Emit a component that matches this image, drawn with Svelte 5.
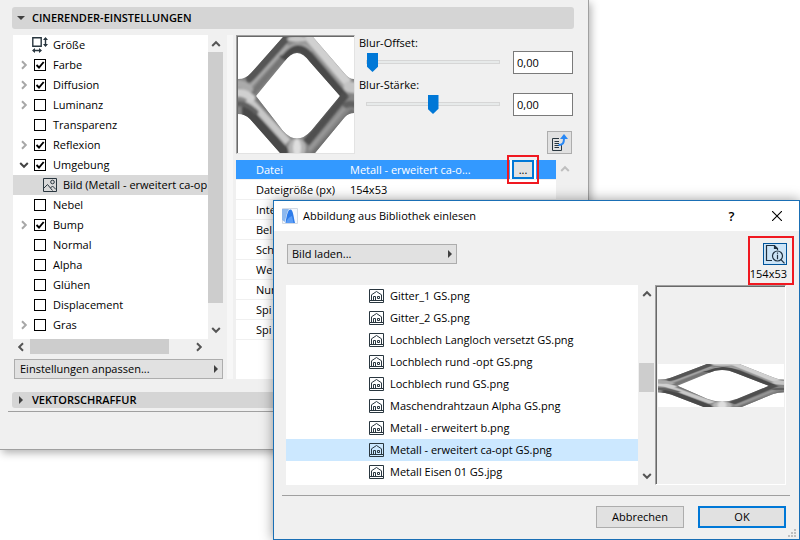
<script>
    let channels = $state([
        { name: 'Farbe', checked: true, expandable: true },
        { name: 'Diffusion', checked: true, expandable: true },
        { name: 'Luminanz', checked: false, expandable: true },
        { name: 'Transparenz', checked: false },
        { name: 'Reflexion', checked: true, expandable: true },
        { name: 'Umgebung', checked: true, expandable: true, child: 'Bild (Metall - erweitert ca-op' },
        { name: 'Nebel', checked: false },
        { name: 'Bump', checked: true, expandable: true },
        { name: 'Normal', checked: false },
        { name: 'Alpha', checked: false },
        { name: 'Glühen', checked: false },
        { name: 'Displacement', checked: false },
        { name: 'Gras', checked: false, expandable: true }
    ]);

    let sliders = $state([
        { id: 'offset', label: 'Blur-Offset:', position: 0, value: '0,00' },
        { id: 'strength', label: 'Blur-Stärke:', position: 50, value: '0,00' }
    ]);

    const properties = ['Inte', 'Bel', 'Sch', 'We', 'Nur', 'Spi', 'Spi'];

    const files = [
        'Gitter_1 GS.png',
        'Gitter_2 GS.png',
        'Lochblech Langloch versetzt GS.png',
        'Lochblech rund -opt GS.png',
        'Lochblech rund GS.png',
        'Maschendrahtzaun Alpha GS.png',
        'Metall - erweitert b.png',
        'Metall - erweitert ca-opt GS.png',
        'Metall Eisen 01 GS.jpg'
    ];
    let selectedFile = $state('Metall - erweitert ca-opt GS.png');
</script>

{#snippet chevron(direction)}
    <svg class="chevron {direction}" width="10" height="10" viewBox="0 0 10 10" aria-hidden="true">
        <path d="M1.2 7 L5 3.2 L8.8 7" />
    </svg>
{/snippet}

{#snippet triangle(direction)}
    <svg class="triangle {direction}" width="8" height="8" viewBox="0 0 8 8" aria-hidden="true">
        <path d="M2 0 L6 4 L2 8 Z" />
    </svg>
{/snippet}

{#snippet mesh(id)}
    <svg class="mesh" viewBox="0 0 116 116" preserveAspectRatio="none" role="img" aria-label="Metall - erweitert">
        <defs>
            <clipPath id="{id}-clip">
                <path clip-rule="evenodd" d="M0 42 Q8 42 13 36 L45 0 H75 L107 37 Q111 42 116 42 V76 Q110 76 106 81 L77 116 H42 L12 82 Q7 77 0 77 Z
                    M18 59 L46 25 Q59 7 72 25 L102 59 L73 94 Q59 109 45 94 Z" />
            </clipPath>
            <filter id="{id}-soft" x="-20%" y="-20%" width="140%" height="140%">
                <feGaussianBlur stdDeviation="1.2" />
            </filter>
        </defs>
        <rect width="116" height="116" fill="#fff" />
        <g clip-path="url(#{id}-clip)">
            <rect width="116" height="116" fill="#858585" />
            <g fill="none" filter="url(#{id}-soft)">
                <!-- upper left bar -->
                <path d="M8 42 Q12 41 18 35 L50 -2" stroke="#555" stroke-width="9" />
                <path d="M10 52 L50 8" stroke="#a8a8a8" stroke-width="3" />
                <path d="M14 57 L52 13" stroke="#747474" stroke-width="5" />
                <!-- upper right bar -->
                <path d="M69 -2 L110 46" stroke="#d0d0d0" stroke-width="9" />
                <path d="M64 2 L107 53" stroke="#999" stroke-width="4" />
                <path d="M45 22 Q59 2 72 20 L106 60" stroke="#484848" stroke-width="9" />
                <path d="M43 18 Q59 -2 74 14" stroke="#aaa" stroke-width="2" />
                <!-- lower left bar -->
                <path d="M4 74 Q10 74 15 81 L48 118" stroke="#484848" stroke-width="11" />
                <path d="M10 62 L50 105" stroke="#c8c8c8" stroke-width="7" />
                <path d="M16 59 L48 95" stroke="#777" stroke-width="3" />
                <!-- lower right bar -->
                <path d="M108 57 L68 106" stroke="#505050" stroke-width="8" />
                <path d="M112 65 L71 113" stroke="#999" stroke-width="3" />
                <path d="M116 74 L74 120" stroke="#707070" stroke-width="7" />
                <!-- joints -->
                <path d="M0 47 Q6 47 11 52" stroke="#aaa" stroke-width="8" stroke-linecap="round" />
                <path d="M-2 56 Q6 55 13 61" stroke="#d0d0d0" stroke-width="8" stroke-linecap="round" />
                <path d="M-2 67 Q8 65 18 75" stroke="#606060" stroke-width="5" stroke-linecap="round" />
                <path d="M111 50 L118 51" stroke="#c4c4c4" stroke-width="11" stroke-linecap="round" />
                <path d="M108 68 Q112 66 118 68" stroke="#606060" stroke-width="6" stroke-linecap="round" />
                <ellipse cx="59" cy="111" rx="9" ry="10" fill="#b4b4b4" />
                <ellipse cx="59" cy="111" rx="4" ry="9" fill="#dedede" />
                <ellipse cx="59" cy="2" rx="10" ry="3" fill="#c8c8c8" />
            </g>
        </g>
    </svg>
{/snippet}

<main>
    <section class="panel">
        <button class="section-head">{@render triangle('down')}CINERENDER-EINSTELLUNGEN</button>

        <div class="settings">
            <div class="channels">
                <div class="tree-wrap">
                    <ul class="tree">
                        <li class="size">
                            <svg width="16" height="16" viewBox="0 0 16 16" aria-hidden="true">
                                <path d="M.8 .8 H9.2 V9.2 H.8 Z" fill="#fff" stroke="#29363f" stroke-width="1.4" />
                                <path d="M13.5 1 V9 M1 13.5 H9" stroke="#29363f" stroke-width="1.4" />
                                <path d="M13.5 0 L16 3 H11 Z M13.5 10 L16 7 H11 Z M0 13.5 L3 11 V16 Z M10 13.5 L7 11 V16 Z" fill="#29363f" />
                            </svg>
                            Größe
                        </li>
                        {#each channels as channel}
                            <li>
                                <span class="expander" class:open={channel.child}>
                                    {#if channel.expandable}
                                        {@render chevron(channel.child ? 'down' : 'right')}
                                    {/if}
                                </span>
                                <label>
                                    <input type="checkbox" bind:checked={channel.checked} />
                                    {channel.name}
                                </label>
                            </li>
                            {#if channel.child}
                                <li class="child">
                                    <svg width="14" height="14" viewBox="0 0 14 14" fill="none" stroke="#29363f" aria-hidden="true">
                                        <path d="M.5 .5 H13.5 V13.5 H.5 Z" />
                                        <circle cx="9.5" cy="4" r="1.8" />
                                        <path d="M1 10 L4.5 6.5 L9.5 12.5 M7.5 10 L9.5 8 L13 11.5" />
                                    </svg>
                                    {channel.child}
                                </li>
                            {/if}
                        {/each}
                    </ul>
                    <div class="scrollbar">
                        {@render chevron('up')}
                        <div class="track"><div class="thumb tree-thumb"></div></div>
                        {@render chevron('down')}
                    </div>
                </div>
                <div class="scrollbar horizontal">
                    {@render chevron('left')}
                    <div class="track"><div class="thumb"></div></div>
                    {@render chevron('right')}
                </div>
                <button class="menu-button">Einstellungen anpassen... {@render triangle('right')}</button>
            </div>

            <div class="splitter"></div>

            <div class="details">
                <div class="texture">
                    <div class="swatch">{@render mesh('swatch')}</div>
                    <div class="blur">
                        {#each sliders as slider}
                            <div class="blur-row">
                                <div class="slider">
                                    <label for={slider.id}>{slider.label}</label>
                                    <input id={slider.id} type="range" min="0" max="100" bind:value={slider.position} />
                                </div>
                                <input class="number" type="text" aria-label={slider.label} bind:value={slider.value} />
                            </div>
                        {/each}
                        <button class="reload" aria-label="Bild neu laden">
                            <svg width="18" height="18" viewBox="0 0 18 18" fill="none" aria-hidden="true">
                                <path d="M8 4.5 H1.5 V16.5 H10.5 V11 M3.5 7.5 H8 M3.5 9.5 H8 M3.5 11.5 H8 M3.5 13.5 H8" stroke="#29363f" />
                                <path d="M7.5 11 C12 11 13 9 13 4" stroke="#2787f5" stroke-width="2" />
                                <path d="M13 0 L17 5 H9 Z" fill="#2787f5" />
                            </svg>
                        </button>
                    </div>
                </div>

                <div class="table-wrap">
                    <table>
                        <tbody>
                            <tr class="selected">
                                <th scope="row">Datei</th>
                                <td>Metall - erweitert ca-o...</td>
                                <td class="action">
                                    <span class="browse"><button>...</button></span>
                                </td>
                            </tr>
                            <tr>
                                <th scope="row">Dateigröße (px)</th>
                                <td>154x53</td>
                                <td></td>
                            </tr>
                            {#each properties as property}
                                <tr>
                                    <th scope="row">{property}</th>
                                    <td></td>
                                    <td></td>
                                </tr>
                            {/each}
                        </tbody>
                    </table>
                    <div class="scrollbar disabled">{@render chevron('up')}</div>
                </div>
            </div>
        </div>

        <button class="section-head closed">{@render triangle('right')}VEKTORSCHRAFFUR</button>
        <hr />
    </section>

    <section class="dialog" role="dialog" aria-labelledby="dialog-title">
        <header>
            <svg width="16" height="16" viewBox="0 0 16 16" aria-hidden="true">
                <path d="M.5 .5 H15.5 V15.5 H.5 Z" fill="#f4f8fd" stroke="#d3dae4" />
                <path d="M0 1 H7 C5 4 4 9 3 14 L0 12 Z" fill="#8db8ee" />
                <path d="M3.5 15 C5 6 6 1.5 8.5 1.5 C11 1.5 11.5 8 13 15 Z" fill="#2c7bea" />
                <path d="M4 15 C5 11 7 9 10 8 L11.5 15 Z" fill="#5a9cf5" />
            </svg>
            <h2 id="dialog-title">Abbildung aus Bibliothek einlesen</h2>
            <button aria-label="Hilfe">?</button>
            <button aria-label="Schließen">
                <svg width="10" height="10" viewBox="0 0 10 10" aria-hidden="true">
                    <path d="M0 0 L10 10 M10 0 L0 10" stroke="#000" stroke-width="1.1" />
                </svg>
            </button>
        </header>

        <div class="toolbar">
            <button class="menu-button">Bild laden... {@render triangle('right')}</button>
            <div class="info">
                <button aria-label="Vorschau">
                    <svg width="20" height="20" viewBox="0 0 20 20" fill="none" stroke="#1f3040" stroke-width="1.2" aria-hidden="true">
                        <path d="M7 16.5 H1.5 V1.5 H9.5 L12.5 4.5 V6 M9.5 1.5 V4.5 H12.5" />
                        <circle cx="12.5" cy="12" r="5" />
                        <path d="M12.5 8.5 V9.7 M12.5 10.8 V15.2 M16 15.7 L19.5 19.3" />
                    </svg>
                </button>
                <span>154x53</span>
            </div>
        </div>

        <div class="browser">
            <ul class="files">
                {#each files as file}
                    <li>
                        <button class:selected={file === selectedFile} onclick={() => (selectedFile = file)}>
                            <svg width="15" height="14" viewBox="0 0 15 14" fill="none" stroke="#29363f" aria-hidden="true">
                                <path d="M.5 .5 H14.5 V13.5 H.5 Z" />
                                <path d="M1 11.5 H14 M2.5 11.5 V5.8 L7.5 2.5 L12.5 5.8 V11.5 M4.5 11.5 V7.5 H6.5 V11.5 M8.5 7.5 H10.5 V9.5 H8.5 Z" />
                            </svg>
                            {file}
                        </button>
                    </li>
                {/each}
            </ul>
            <div class="scrollbar">
                {@render chevron('up')}
                <div class="track"><div class="thumb file-thumb"></div></div>
                {@render chevron('down')}
            </div>
            <div class="preview">{@render mesh('preview')}</div>
        </div>

        <footer>
            <button>Abbrechen</button>
            <button class="primary">OK</button>
        </footer>
        <svg class="grip" width="8" height="8" viewBox="0 0 8 8" aria-hidden="true">
            <path d="M6 0 H8 V2 H6 Z M3 3 H5 V5 H3 Z M6 3 H8 V5 H6 Z M0 6 H2 V8 H0 Z M3 6 H5 V8 H3 Z M6 6 H8 V8 H6 Z" fill="#bfbfbf" />
        </svg>
    </section>
</main>

<style>
    :global(body) {
        background: #fff;
    }

    main {
        position: relative;
        overflow: hidden;
        padding-bottom: 90px;
        font-family: "Open Sans", "Noto Sans", sans-serif;
        font-size: 11px;
        line-height: 20px;
        color: #000;
    }

    *, *::before {
        box-sizing: border-box;
    }

    button, input {
        font: inherit;
        color: inherit;
    }

    button {
        margin: 0;
        padding: 0;
        border: none;
        background: none;
        border-radius: 0;
    }

    ul {
        list-style: none;
        margin: 0;
        padding: 0;
    }

    svg {
        display: block;
        flex: none;
    }

    .panel {
        margin-right: 211px;
        padding: 7px 14px 37px 12px;
        background: #f0f0f0;
        border-right: 1px solid #a0a0a0;
        border-bottom: 1px solid #a0a0a0;
        box-shadow: 2px 3px 8px rgba(0, 0, 0, 0.3);
    }

    .section-head {
        display: flex;
        align-items: center;
        gap: 7px;
        width: 100%;
        height: 22px;
        padding-left: 5px;
        background: #d5d5d5;
        border-radius: 3px;
        font-weight: 600;
    }

    .section-head.closed {
        height: 16px;
        margin-top: 13px;
    }

    hr {
        height: 1px;
        margin: 3px -14px 0 -4px;
        border: none;
        background: #a0a0a0;
    }

    .chevron path {
        fill: none;
        stroke: #555;
        stroke-width: 2;
    }

    .chevron.right {
        transform: rotate(90deg);
    }

    .chevron.down {
        transform: rotate(180deg);
    }

    .chevron.left {
        transform: rotate(270deg);
    }

    .triangle {
        fill: #404040;
    }

    .triangle.down {
        transform: rotate(90deg);
    }

    .settings {
        display: flex;
        gap: 4px;
        margin-top: 6px;
        padding-left: 1px;
    }

    .channels {
        flex: none;
        width: 210px;
    }

    .tree-wrap {
        display: flex;
    }

    .tree {
        flex: 1;
        min-width: 0;
        padding-bottom: 4px;
        background: #fff;
    }

    .tree li {
        display: flex;
        align-items: center;
        height: 20px;
        overflow: hidden;
        white-space: nowrap;
    }

    .tree .size {
        gap: 5px;
        padding-left: 19px;
    }

    .tree .child {
        gap: 6px;
        padding-left: 30px;
        background: #d9d9d9;
    }

    .tree label {
        display: flex;
        align-items: center;
        gap: 7px;
    }

    .expander {
        width: 21px;
        padding-left: 6px;
    }

    .expander .chevron path {
        stroke: #a8a8a8;
    }

    .expander.open .chevron path {
        stroke: #444;
    }

    input[type="checkbox"] {
        appearance: none;
        width: 12px;
        height: 12px;
        margin: 0;
        border: 1px solid #000;
        background: #fff;
    }

    input[type="checkbox"]:checked {
        background: url('data:image/svg+xml,<svg xmlns="http://www.w3.org/2000/svg" viewBox="0 0 10 10"><path d="M1.5 5 L4 7.5 L8.7 2" fill="none" stroke="black" stroke-width="1.9"/></svg>');
    }

    .scrollbar {
        display: flex;
        flex-direction: column;
        align-items: center;
        justify-content: space-between;
        flex: none;
        width: 15px;
        padding: 4px 0;
    }

    .track {
        flex: 1;
        width: 100%;
        margin: 3px 0;
    }

    .thumb {
        width: 100%;
        background: #cdcdcd;
    }

    .tree-thumb {
        height: 92%;
    }

    .tree-wrap .tree-thumb {
        height: 93%;
    }

    .scrollbar.horizontal {
        flex-direction: row;
        width: auto;
        height: 15px;
        margin-right: 15px;
        padding: 0 4px 0 3px;
    }

    .horizontal .track {
        height: 100%;
        margin: 0 4px;
    }

    .horizontal .thumb {
        width: 87%;
        height: 100%;
    }

    .menu-button {
        display: flex;
        align-items: center;
        justify-content: space-between;
        height: 20px;
        padding: 0 2px 0 4px;
        border: 1px solid #adadad;
        background: #e1e1e1;
    }

    .channels .menu-button {
        width: 209px;
        margin: 5px 0 0 1px;
        padding-left: 5px;
    }

    .splitter {
        width: 6px;
        background: #f7f7f7;
    }

    .details {
        flex: 1;
        min-width: 0;
        display: flex;
        flex-direction: column;
        gap: 6px;
        margin-left: -1px;
    }

    .texture {
        display: flex;
        gap: 4px;
    }

    .swatch {
        flex: none;
        width: 119px;
        height: 119px;
        padding: 1px 0 0 1px;
        border: 1px solid;
        border-color: #a0a0a0 #e3e3e3 #e3e3e3 #a0a0a0;
        background: #696969;
    }

    .mesh {
        width: 100%;
        height: 100%;
    }

    .blur {
        flex: 1;
        min-width: 0;
        display: flex;
        flex-direction: column;
        padding: 1px 1px 0 0;
    }

    .blur-row {
        display: flex;
        justify-content: space-between;
        height: 42px;
        line-height: 14px;
    }

    .slider {
        flex: 1;
        min-width: 0;
        max-width: 141px;
    }

    .slider label {
        display: block;
    }

    input[type="range"] {
        display: block;
        appearance: none;
        width: calc(100% - 7px);
        height: 20px;
        margin: 2px 0 0 7px;
        background: none;
    }

    input[type="range"]::-webkit-slider-runnable-track {
        height: 4px;
        border: 1px solid #d6d6d6;
        background: #e7eaea;
    }

    input[type="range"]::-webkit-slider-thumb {
        appearance: none;
        width: 11px;
        height: 19px;
        margin-top: -8px;
        background: #0078d7;
        clip-path: polygon(0 0, 100% 0, 100% 72%, 50% 100%, 0 72%);
    }

    .number {
        width: 60px;
        height: 23px;
        margin-top: 15px;
        padding: 0 3px;
        border: 1px solid #7a7a7a;
        background: #fff;
    }

    .reload {
        display: flex;
        align-items: center;
        justify-content: center;
        align-self: flex-end;
        width: 25px;
        height: 23px;
        margin: 11px 1px 0 0;
        border: 1px solid #adadad;
        background: #e1e1e1;
    }

    .table-wrap {
        flex: 1;
        display: flex;
        background: #fff;
    }

    table {
        flex: 1;
        align-self: flex-start;
        table-layout: fixed;
        border-spacing: 0;
    }

    th, td {
        height: 20px;
        padding: 0;
        border-bottom: 1px solid #f0f0f0;
        line-height: 19px;
        font-weight: 400;
        text-align: left;
        white-space: nowrap;
    }

    th {
        width: 114px;
        padding-left: 20px;
    }

    td:last-child {
        width: 48px;
    }

    .selected th, .selected td {
        background: #3399ff;
        background-clip: padding-box;
        color: #fff;
    }

    td.action {
        position: relative;
    }

    .browse {
        display: block;
        width: 26px;
        padding: 0 2px;
        margin-left: 2px;
        background: #fff;
    }

    /* highlight frame around the browse button */
    .browse::before {
        content: "";
        position: absolute;
        top: -5px;
        left: -1px;
        width: 32px;
        height: 29px;
        border: 2px solid #f01820;
        pointer-events: none;
    }

    .browse button {
        display: block;
        width: 22px;
        height: 19px;
        border: 2px solid #0078d7;
        background: #e1e1e1;
        color: #000;
        line-height: 14px;
    }

    .scrollbar.disabled {
        width: 18px;
        background: #f0f0f0;
    }

    .disabled .chevron path {
        stroke: #bfbfbf;
    }

    .dialog {
        position: absolute;
        top: 200px;
        left: 273px;
        right: 0;
        background: #f0f0f0;
        border: 1px solid #1a6fb5;
        box-shadow: 0 0 12px rgba(0, 0, 0, 0.4);
    }

    header {
        display: flex;
        align-items: center;
        height: 30px;
        padding-left: 8px;
        background: #fff;
    }

    h2 {
        flex: 1;
        margin: 0 0 0 5px;
        font-size: 11px;
        font-weight: 400;
    }

    header button {
        display: flex;
        align-items: center;
        justify-content: center;
        width: 45px;
        height: 30px;
        font-size: 13px;
        font-weight: 600;
    }

    .toolbar {
        display: flex;
        justify-content: space-between;
        align-items: flex-start;
        height: 54px;
        padding: 5px 5px 0 13px;
    }

    .toolbar .menu-button {
        width: 170px;
        margin-top: 8px;
    }

    .info {
        display: flex;
        flex-direction: column;
        align-items: flex-end;
        width: 46px;
        height: 49px;
        padding: 5px;
        border: 2px solid #f01820;
        line-height: 18px;
    }

    .info button {
        display: flex;
        align-items: center;
        justify-content: center;
        width: 24px;
        height: 22px;
        border: 1px solid #00549b;
        background: #cce4f7;
    }

    .browser {
        display: flex;
        margin: 0 13px 0 12px;
    }

    .files {
        flex: 1;
        min-width: 0;
        padding-bottom: 2px;
        background: #fff;
    }

    .files button {
        display: flex;
        align-items: center;
        gap: 6px;
        width: 100%;
        height: 22px;
        padding-left: 83px;
    }

    .files .selected {
        background: #cce8ff;
    }

    .file-thumb {
        height: 29px;
        margin-top: 61px;
    }

    .browser .scrollbar {
        margin-left: 1px;
    }

    .preview {
        display: flex;
        align-items: center;
        width: 131px;
        margin-left: 1px;
        padding: 0 1px 0 2px;
        border: 1px solid;
        border-color: #a0a0a0 #fff #fff #a0a0a0;
        box-shadow: inset 1px 1px #696969;
    }

    .preview .mesh {
        height: 43px;
    }

    footer {
        display: flex;
        justify-content: flex-end;
        gap: 14px;
        margin: 10px 9px 0 8px;
        padding: 10px 4px 11px 0;
        border-top: 1px solid #a0a0a0;
    }

    footer button {
        width: 88px;
        height: 22px;
        border: 1px solid #adadad;
        background: #e1e1e1;
        line-height: 18px;
    }

    footer .primary {
        border: 2px solid #0078d7;
    }

    .grip {
        position: absolute;
        right: 3px;
        bottom: 2px;
    }
</style>
